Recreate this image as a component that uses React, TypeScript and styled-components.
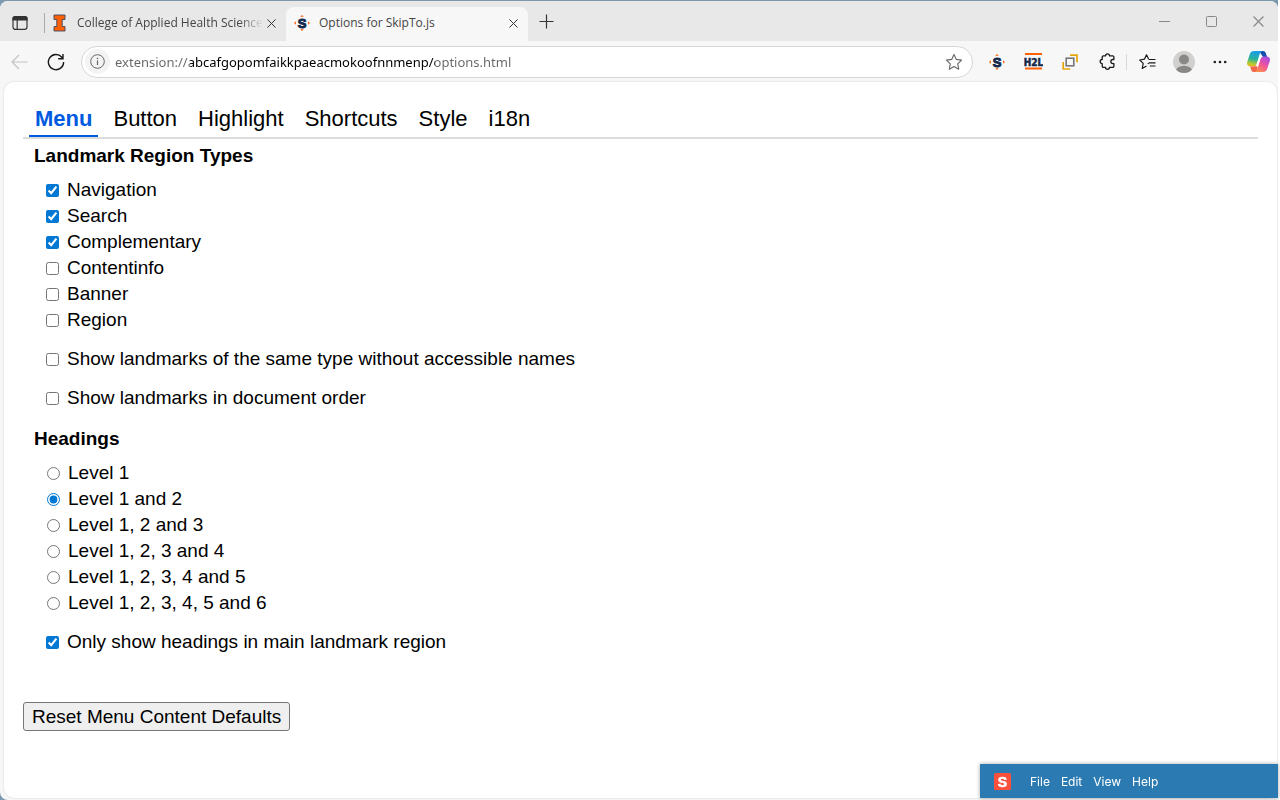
import React, { useState } from "react";
import styled, { createGlobalStyle } from "styled-components";

const GlobalStyle = createGlobalStyle`
  *, *::before, *::after { box-sizing: border-box; }
  body {
    margin: 0;
    background: #fff;
    color: #000;
    font-family: Arial, "Liberation Sans", sans-serif;
  }
  button { font-family: inherit; color: inherit; cursor: pointer; }
  svg { display: block; flex: none; }
`;

const chromeFont = `"Segoe UI", "Open Sans", "Noto Sans", sans-serif`;
const addressFont = `"Segoe UI", "Noto Sans", sans-serif`;

const Desktop = styled.div`
  min-height: 100vh;
  display: flex;
  flex-direction: column;
  padding: 1px 2px 0 0;
  background: linear-gradient(to left, #fff 2px, #7c98ae 2px);
`;

const BrowserWindow = styled.div`
  flex: 1;
  display: flex;
  flex-direction: column;
  background: #f7f7f7;
  border-radius: 8px 8px 0 8px;
  overflow: hidden;
`;

const TitleBar = styled.header`
  display: flex;
  align-items: stretch;
  height: 40px;
  background: #e8e8e8;
  font-family: ${chromeFont};
`;

const IconButton = styled.button<{ $w: number }>`
  width: ${(p) => p.$w}px;
  display: flex;
  align-items: center;
  justify-content: center;
  flex: none;
  padding: 0;
  border: 0;
  background: none;
`;

const WorkspaceArea = styled.div`
  display: flex;
  align-items: center;
  gap: 4px;
  padding: 4px 3px 0 0;
`;

const Divider = styled.span<{ $color: string; $h: number }>`
  width: 1px;
  height: ${(p) => p.$h}px;
  background: ${(p) => p.$color};
`;

const BrowserTab = styled.div<{ $active?: boolean }>`
  display: flex;
  align-items: center;
  gap: ${(p) => (p.$active ? 9 : 11)}px;
  width: ${(p) => (p.$active ? 242 : 238)}px;
  height: 36px;
  margin-top: 6px;
  padding: 0 7px 4px ${(p) => (p.$active ? 8 : 5)}px;
  border-radius: 8px 8px 0 0;
  background: ${(p) => (p.$active ? "#f7f7f7" : "transparent")};
`;

const TabTitle = styled.button<{ $fade?: boolean }>`
  flex: 1;
  padding: 0;
  border: 0;
  background: none;
  color: #444;
  font-size: 12px;
  line-height: 20px;
  text-align: left;
  white-space: nowrap;
  ${(p) => p.$fade && "mask-image: linear-gradient(to left, transparent, #000 24px);"}
`;

const TabClose = styled.button`
  display: flex;
  justify-content: center;
  width: 16px;
  padding: 4px 0;
  margin-left: -9px;
  border: 0;
  background: none;
`;

const WindowControls = styled.div`
  display: flex;
  margin-left: auto;
`;

const Toolbar = styled.div`
  display: flex;
  align-items: center;
  height: 41px;
`;

const AddressBar = styled.label`
  flex: 1;
  display: flex;
  align-items: center;
  height: 32px;
  margin: 0 6px 0 7px;
  padding: 0 1px 0 3px;
  border: 1px solid #d6d6d6;
  border-radius: 16px;
  background: #fff;
`;

const SiteInfo = styled.button`
  width: 25px;
  height: 25px;
  display: flex;
  align-items: center;
  justify-content: center;
  padding: 0;
  border: 0;
  border-radius: 50%;
  background: #f3f3f3;
`;

const AddressInput = styled.input`
  flex: 1;
  min-width: 0;
  height: 28px;
  margin-left: 5px;
  padding: 0;
  border: 0;
  outline: 0;
  font-family: ${addressFont};
  font-size: 13px;
  color: #666;
  background: linear-gradient(to right, #666 75px, #000 75px 320px, #666 320px);
  background-clip: text;
  -webkit-background-clip: text;
  -webkit-text-fill-color: transparent;
`;

const Page = styled.main`
  flex: 1;
  margin: 0 1px 2px 4px;
  padding: 18px 19px 32px;
  border-radius: 10px;
  background: #fff;
  box-shadow: 0 0 2px #ccc;
`;

const TabList = styled.div`
  display: flex;
  gap: 9px;
  padding-left: 6px;
  margin-bottom: 4px;
  border-bottom: 2px solid #dcdcdc;
`;

const OptionTab = styled.button<{ $active: boolean }>`
  height: 37px;
  padding: 2px 6px 0;
  border: 0;
  border-bottom: 2px solid ${(p) => (p.$active ? "#005ae0" : "transparent")};
  background: none;
  color: ${(p) => (p.$active ? "#005ae0" : "#000")};
  font-size: 22px;
  line-height: 32px;
  font-weight: ${(p) => (p.$active ? 700 : 400)};
`;

const Group = styled.fieldset`
  margin: 0 0 15px;
  padding: 0 11px;
  border: 0;
`;

const GroupTitle = styled.legend`
  padding: 0;
  margin: 6px 0 8px;
  font-size: 19px;
  line-height: 26px;
  font-weight: 700;
`;

const OptionRow = styled.label<{ $spaced?: boolean }>`
  display: flex;
  align-items: center;
  width: fit-content;
  height: 26px;
  margin-top: ${(p) => (p.$spaced ? 13 : 0)}px;
  padding-left: 12px;
  font-size: 19px;
  line-height: 26px;
`;

const Choice = styled.input`
  width: 13px;
  height: 13px;
  margin: 0 8px 0 0;
  accent-color: #0078d4;
  &[type="radio"] { margin-left: 1px; }
`;

const ResetButton = styled.button`
  height: 29px;
  margin-top: 32px;
  padding: 0 8px;
  border: 1px solid #767676;
  border-radius: 3px;
  background: #efefef;
  font-size: 19px;
  line-height: 26px;
`;

const RecorderBar = styled.nav`
  position: fixed;
  right: 2px;
  bottom: 2px;
  display: flex;
  align-items: center;
  gap: 11px;
  width: 298px;
  height: 34px;
  padding: 1px 0 0 14px;
  background: #2b7ab1;
  box-shadow: 0 0 4px rgba(0, 0, 0, 0.35);
  color: #fff;
  font-family: "Proxima Nova", Inter, sans-serif;
  svg { margin-right: 8px; }
`;

const RecorderItem = styled.button`
  padding: 0;
  border: 0;
  background: none;
  font-size: 12px;
  line-height: 16px;
`;

const SkipToLogo = () => (
  <svg width="16" height="16" viewBox="0 0 16 16" aria-hidden="true">
    <path d="M8 0 9.800 1.800H6.200zM8 16 6.200 14.200h3.600zM0 8l1.900-1.800v3.600zM16 8l-1.900 1.800V6.200z" fill="#ff5f05" />
    <text x="8" y="12.500" textAnchor="middle" fontFamily="Liberation Sans" fontWeight="700" fontSize="13" fill="#13294b" stroke="#13294b" strokeWidth="1">S</text>
  </svg>
);

const CloseIcon = ({ size = 9, color = "#333" }) => (
  <svg width={size} height={size} viewBox="0 0 10 10" fill="none" stroke={color} strokeWidth="1.100" aria-hidden="true">
    <path d="M.5.5l9 9M9.500.5l-9 9" />
  </svg>
);

const IllinoisLogo = () => (
  <svg width="13" height="18" viewBox="0 0 13 18" aria-hidden="true">
    <path d="M1 1h11v4.500H9.200v7H12V17H1v-4.500h2.800v-7H1z" fill="#ff5f05" stroke="#3c4860" strokeWidth=".9" />
  </svg>
);

const SidebarIcon = () => (
  <svg width="16" height="16" viewBox="0 0 16 16" fill="none" stroke="#333" strokeWidth="1.200" aria-hidden="true">
    <rect x="1" y="1.600" width="14" height="12.800" rx="2.300" />
    <path d="M1 4V3.600a2 2 0 0 1 2-2h10a2 2 0 0 1 2 2V5H1z" fill="#333" />
    <path d="M5.200 5v9.300" />
  </svg>
);

const BackIcon = () => (
  <svg width="17" height="16" viewBox="0 0 17 16" fill="none" stroke="#c4c4c4" strokeWidth="1.200" aria-hidden="true">
    <path d="M16.500 8H1M8 1 1 8l7 7" />
  </svg>
);

const ReloadIcon = () => (
  <svg width="18" height="18" viewBox="0 0 18 18" fill="none" stroke="#1a1a1a" strokeWidth="1.400" aria-hidden="true">
    <path d="M16.600 9A7.600 7.600 0 1 1 14.800 4.200L16 5.600M16 1v4.800h-4.800" />
  </svg>
);

const InfoIcon = () => (
  <svg width="15" height="15" viewBox="0 0 15 15" fill="none" stroke="#666" aria-hidden="true">
    <circle cx="7.500" cy="7.500" r="6.800" />
    <path d="M7.500 6.600V11" strokeWidth="1.200" />
    <circle cx="7.500" cy="4.500" r=".8" fill="#666" stroke="none" />
  </svg>
);

const StarIcon = () => (
  <svg width="18" height="18" viewBox="0 0 18 18" fill="none" stroke="#666" strokeWidth="1.100" strokeLinejoin="round" aria-hidden="true">
    <path d="m9 1.500 2.300 4.900 5.300.7-3.900 3.700 1 5.400L9 13.600l-4.700 2.600 1-5.400-3.900-3.700 5.300-.7z" />
  </svg>
);

const HeadingsLogo = () => (
  <svg width="19" height="17" viewBox="0 0 19 17" aria-hidden="true">
    <path d="M1 0h17v2H1zM1 14.500h17v2H1z" fill="#ff5f05" />
    <text x="9.500" y="12.500" textAnchor="middle" fontFamily="Liberation Sans Narrow, DejaVu Sans Condensed" fontWeight="700" fontSize="10" fill="#13294b" stroke="#13294b" strokeWidth=".5">H2L</text>
  </svg>
);

const LandmarksIcon = () => (
  <svg width="16" height="16" viewBox="0 0 16 16" fill="none" aria-hidden="true">
    <path d="M8 1.200h7v7M1.200 8v7h7" stroke="#e5a50a" strokeWidth="1.700" />
    <rect x="4.200" y="4.200" width="7.600" height="7.600" stroke="#777" strokeWidth="1.600" />
  </svg>
);

const PuzzleIcon = () => (
  <svg width="17" height="17" viewBox="0 0 17 17" fill="none" stroke="#1a1a1a" strokeWidth="1.300" strokeLinejoin="round" aria-hidden="true">
    <path d="M6.500 2.900a2 2 0 0 1 4 0h3.200a1.200 1.200 0 0 1 1.200 1.200v2.400h-1a2.050 2.050 0 0 0 0 4.100h1v2.500a1.200 1.200 0 0 1-1.200 1.200h-3.200a2 2 0 0 1-4 0H4.400a1.200 1.200 0 0 1-1.200-1.200v-2.500a2.050 2.050 0 0 1 0-4.100V4.100a1.200 1.200 0 0 1 1.200-1.200z" />
  </svg>
);

const FavoritesIcon = () => (
  <svg width="17" height="16" viewBox="0 0 17 16" fill="none" stroke="#1a1a1a" strokeWidth="1.200" strokeLinejoin="round" aria-hidden="true">
    <path d="M9.600 5 7.500.8 5.400 5.200.7 6l3.500 3.400-1 5.100 4.300-2.400M9.600 5.500H16.500M9.800 8.800h6.700M10.800 12h5.700M9.600 5.500 11 5.500M9.500 9l-.6 1" />
  </svg>
);

const ProfileIcon = () => (
  <svg width="22" height="22" viewBox="0 0 22 22" aria-hidden="true">
    <clipPath id="face"><circle cx="11" cy="11" r="11" /></clipPath>
    <g clipPath="url(#face)">
      <path d="M0 0h22v22H0z" fill="#d2d0ce" />
      <circle cx="11" cy="8.500" r="5" fill="#8a8886" />
      <ellipse cx="11" cy="20" rx="8.200" ry="5.200" fill="#8a8886" />
    </g>
  </svg>
);

const MoreIcon = () => (
  <svg width="14" height="4" viewBox="0 0 14 4" fill="#1a1a1a" aria-hidden="true">
    <circle cx="1.800" cy="2" r="1.300" /><circle cx="7" cy="2" r="1.300" /><circle cx="12.200" cy="2" r="1.300" />
  </svg>
);

const CopilotLogo = () => (
  <svg width="23" height="21" viewBox="0 0 23 21" aria-hidden="true">
    <defs>
      <linearGradient id="cool" x1=".4" y1="0" x2=".2" y2="1">
        <stop offset="0" stopColor="#189ee8" /><stop offset=".5" stopColor="#28b39a" />
        <stop offset=".8" stopColor="#b4c932" /><stop offset="1" stopColor="#f1b51c" />
      </linearGradient>
      <linearGradient id="warm" x1=".8" y1="0" x2=".2" y2="1">
        <stop offset="0" stopColor="#a64ae8" /><stop offset=".5" stopColor="#f0569a" /><stop offset="1" stopColor="#ff9145" />
      </linearGradient>
    </defs>
    <path d="M12 0h4a3 3 0 0 1 2.900 2.200L20 6h-4z" fill="#174fae" />
    <path d="M7 0h9c-2 0-2.900 1.500-3.400 3.200L10 12c-.8 2.400-1.800 3.500-4 3.500H3.200C.8 15.500-.5 13.500.2 11L2.800 3.200C3.500 1 5 0 7 0z" fill="url(#cool)" />
    <path d="M11 21H7c-1.600 0-2.400-.9-2.900-2.300L3.200 15.500H6c2.200 0 3.200-1 4-3.500z" fill="#ef6a4d" />
    <path d="M16 21H7c2 0 2.900-1.500 3.400-3.200L13 9c.8-2.400 1.800-3.500 4-3.500h2.800c2.400 0 3.700 2 3 4.500l-2.600 7.800C19.500 20 18 21 16 21z" fill="url(#warm)" />
    <path d="M12.600 5.600h3.200c-1.500.6-2.200 1.700-2.800 3.400l-2 6.300H8.100c1-.7 1.500-1.700 1.900-3.300z" fill="#fff" />
  </svg>
);

const SnagitLogo = () => (
  <svg width="17" height="17" viewBox="0 0 17 17" aria-hidden="true">
    <rect width="17" height="17" rx="1.500" fill="#fa503c" />
    <text x="8.500" y="13.500" textAnchor="middle" fontFamily="Liberation Sans" fontWeight="700" fontSize="14" fill="#fff" stroke="#fff" strokeWidth=".6">S</text>
  </svg>
);

const tabs = ["Menu", "Button", "Highlight", "Shortcuts", "Style", "i18n"];
const landmarks = ["Navigation", "Search", "Complementary", "Contentinfo", "Banner", "Region"];
const landmarkExtras = ["Show landmarks of the same type without accessible names", "Show landmarks in document order"];
const levels = ["Level 1", "Level 1 and 2", "Level 1, 2 and 3", "Level 1, 2, 3 and 4", "Level 1, 2, 3, 4 and 5", "Level 1, 2, 3, 4, 5 and 6"];
const mainOnly = "Only show headings in main landmark region";
const defaultChecks = ["Navigation", "Search", "Complementary", mainOnly];

export default function App() {
  const [tab, setTab] = useState("Menu");
  const [checks, setChecks] = useState(defaultChecks);
  const [level, setLevel] = useState("Level 1 and 2");

  const toggle = (name: string) =>
    setChecks((c) => (c.includes(name) ? c.filter((n) => n !== name) : [...c, name]));

  const reset = () => {
    setChecks(defaultChecks);
    setLevel("Level 1 and 2");
  };

  const checkRow = (name: string, spaced = false) => (
    <OptionRow key={name} $spaced={spaced}>
      <Choice type="checkbox" checked={checks.includes(name)} onChange={() => toggle(name)} />
      {name}
    </OptionRow>
  );

  return (
    <Desktop>
      <GlobalStyle />
      <BrowserWindow>
        <TitleBar>
          <WorkspaceArea>
            <IconButton $w={40} aria-label="Tab actions"><SidebarIcon /></IconButton>
            <Divider $color="#aaa" $h={20} />
          </WorkspaceArea>
          <BrowserTab>
            <IllinoisLogo />
            <TabTitle $fade>College of Applied Health Science</TabTitle>
            <TabClose aria-label="Close tab"><CloseIcon /></TabClose>
          </BrowserTab>
          <BrowserTab $active>
            <SkipToLogo />
            <TabTitle>Options for SkipTo.js</TabTitle>
            <TabClose aria-label="Close tab"><CloseIcon /></TabClose>
          </BrowserTab>
          <IconButton $w={36} aria-label="New tab">
            <svg width="15" height="15" viewBox="0 0 15 15" stroke="#333" strokeWidth="1.200"><path d="M7.500.5v14M.5 7.500h14" /></svg>
          </IconButton>
          <WindowControls>
            <IconButton $w={41} aria-label="Minimize">
              <svg width="11" height="11" viewBox="0 0 11 11" stroke="#888"><path d="M0 5.500h11" /></svg>
            </IconButton>
            <IconButton $w={53} aria-label="Maximize">
              <svg width="11" height="11" viewBox="0 0 11 11" stroke="#888" fill="none"><rect x=".5" y=".5" width="10" height="10" rx="1" /></svg>
            </IconButton>
            <IconButton $w={40} aria-label="Close window"><CloseIcon size={11} color="#888" /></IconButton>
          </WindowControls>
        </TitleBar>
        <Toolbar>
          <IconButton $w={38} aria-label="Back"><BackIcon /></IconButton>
          <IconButton $w={36} aria-label="Reload"><ReloadIcon /></IconButton>
          <AddressBar>
            <SiteInfo aria-label="Site information"><InfoIcon /></SiteInfo>
            <AddressInput aria-label="Address" defaultValue="extension://abcafgopomfaikkpaeacmokoofnnmenp/options.html" />
            <IconButton $w={34} aria-label="Add to favorites"><StarIcon /></IconButton>
          </AddressBar>
          <IconButton $w={36} aria-label="SkipTo"><SkipToLogo /></IconButton>
          <IconButton $w={36} aria-label="H2L"><HeadingsLogo /></IconButton>
          <IconButton $w={37} aria-label="Landmarks"><LandmarksIcon /></IconButton>
          <IconButton $w={38} aria-label="Extensions"><PuzzleIcon /></IconButton>
          <Divider $color="#d8d8d8" $h={16} />
          <IconButton $w={40} aria-label="Favorites"><FavoritesIcon /></IconButton>
          <IconButton $w={34} aria-label="Profile"><ProfileIcon /></IconButton>
          <IconButton $w={38} aria-label="More"><MoreIcon /></IconButton>
          <IconButton $w={39} aria-label="Copilot"><CopilotLogo /></IconButton>
        </Toolbar>
        <Page>
          <TabList role="tablist">
            {tabs.map((t) => (
              <OptionTab key={t} role="tab" aria-selected={t === tab} $active={t === tab} onClick={() => setTab(t)}>{t}</OptionTab>
            ))}
          </TabList>
          <Group>
            <GroupTitle>Landmark Region Types</GroupTitle>
            {landmarks.map((n) => checkRow(n))}
            {landmarkExtras.map((n) => checkRow(n, true))}
          </Group>
          <Group>
            <GroupTitle>Headings</GroupTitle>
            {levels.map((n) => (
              <OptionRow key={n}>
                <Choice type="radio" name="level" checked={level === n} onChange={() => setLevel(n)} />
                {n}
              </OptionRow>
            ))}
            {checkRow(mainOnly, true)}
          </Group>
          <ResetButton onClick={reset}>Reset Menu Content Defaults</ResetButton>
        </Page>
      </BrowserWindow>
      <RecorderBar>
        <SnagitLogo />
        {["File", "Edit", "View", "Help"].map((n) => <RecorderItem key={n}>{n}</RecorderItem>)}
      </RecorderBar>
    </Desktop>
  );
}
